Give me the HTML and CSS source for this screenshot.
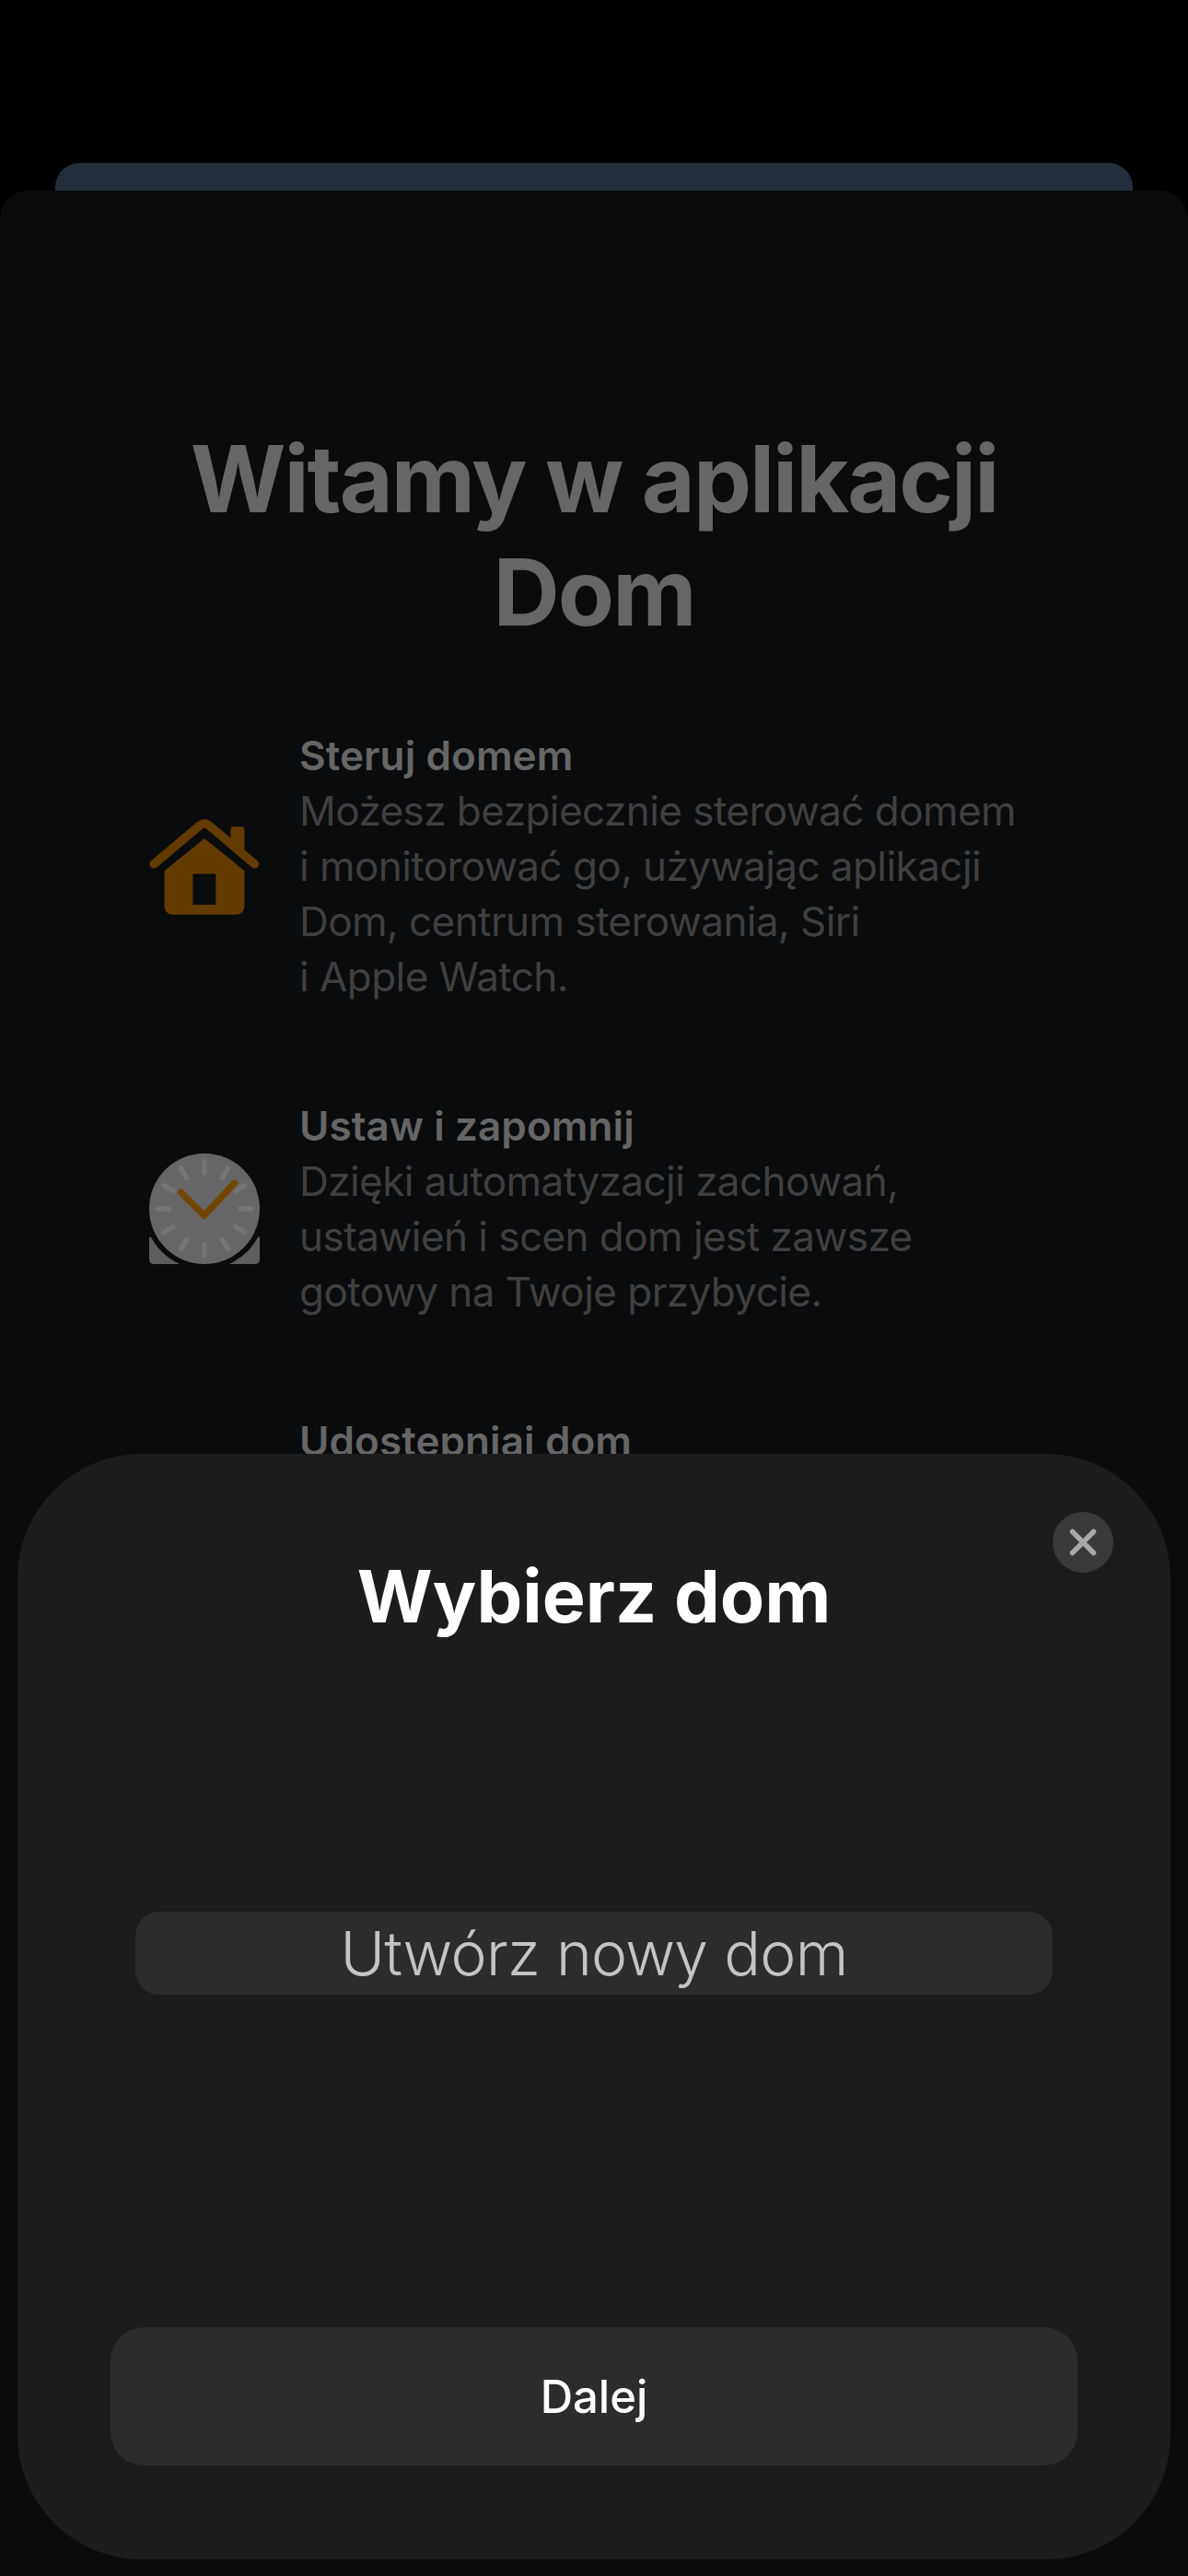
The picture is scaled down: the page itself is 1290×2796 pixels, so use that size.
FILE: index.html
```html
<!DOCTYPE html>
<html lang="pl">
<head>
<meta charset="utf-8">
<title>Wybierz dom</title>
<link rel="stylesheet" href="styles.css">
</head>
<body>
<div class="screen">
  <div class="back-card"></div>
  <main class="front-card">
    <h1 class="welcome">Witamy w aplikacji<br>Dom</h1>
    <section class="feature">
      <svg class="feature-icon" width="120" height="105" viewBox="97 87 356 314" aria-hidden="true">
        <path class="house-fill" d="M360 125q0-10 10-10h25q10 0 10 10v65h-45z"/>
        <path class="house-roof" d="M111 236L262 109q13-10 26 0L438 236"/>
        <path class="house-fill" fill-rule="evenodd" d="M145 258L275 153L405 258V370q0 30-30 30H175q-30 0-30-30zM237 268V368H312V268z"/>
      </svg>
      <div class="feature-text">
        <h2 class="feature-title">Steruj domem</h2>
        <p class="feature-body">Możesz bezpiecznie sterować domem<br>i monitorować go, używając aplikacji<br>Dom, centrum sterowania, Siri<br>i Apple Watch.</p>
      </div>
    </section>
    <section class="feature">
      <svg class="feature-icon" width="120" height="120" viewBox="96 68 360 360" aria-hidden="true">
        <path class="clock-base" d="M96 340H456V412q0 16-16 16H112q-16 0-16-16z"/>
        <circle class="clock-gap" cx="276" cy="248" r="197"/>
        <circle class="clock-face" cx="276" cy="248" r="180"/>
        <g class="clock-ticks">
          <path d="M276 96V132"/><path d="M276 96V132" transform="rotate(30 276 248)"/><path d="M276 96V132" transform="rotate(60 276 248)"/>
          <path d="M276 96V132" transform="rotate(90 276 248)"/><path d="M276 96V132" transform="rotate(120 276 248)"/><path d="M276 96V132" transform="rotate(150 276 248)"/>
          <path d="M276 96V132" transform="rotate(180 276 248)"/><path d="M276 96V132" transform="rotate(210 276 248)"/><path d="M276 96V132" transform="rotate(240 276 248)"/>
          <path d="M276 96V132" transform="rotate(270 276 248)"/><path d="M276 96V132" transform="rotate(300 276 248)"/><path d="M276 96V132" transform="rotate(330 276 248)"/>
        </g>
        <path class="clock-hands" d="M200 195L275 270L374 165"/>
      </svg>
      <div class="feature-text">
        <h2 class="feature-title">Ustaw i zapomnij</h2>
        <p class="feature-body">Dzięki automatyzacji zachowań,<br>ustawień i scen dom jest zawsze<br>gotowy na Twoje przybycie.</p>
      </div>
    </section>
    <section class="feature">
      <div class="feature-spacer"></div>
      <div class="feature-text">
        <h2 class="feature-title">Udostępniaj dom</h2>
      </div>
    </section>
  </main>
  <aside class="sheet">
    <button class="close" aria-label="Zamknij">
      <svg width="30" height="30" viewBox="0 0 30 30" aria-hidden="true"><path d="M3.5 3.5L26.5 26.5M26.5 3.5L3.5 26.5"/></svg>
    </button>
    <h2 class="sheet-title">Wybierz dom</h2>
    <div class="option">Utwórz nowy dom</div>
    <button class="next">Dalej</button>
  </aside>
</div>
</body>
</html>
```
FILE: styles.css
```css
* { box-sizing: border-box; }
html, body { margin: 0; padding: 0; background: #000; }
body { font-family: Inter, "Liberation Sans", sans-serif; }
h1, h2, p { margin: 0; font-weight: normal; }
button { border: 0; padding: 0; font: inherit; }

.screen {
  position: relative;
  width: 1290px;
  height: 2796px;
  overflow: hidden;
  padding-top: 177px;
}
.back-card {
  height: 60px;
  margin: 0 60px -30px;
  border-radius: 26px 26px 0 0;
  background: #23303b;
}
.front-card {
  position: relative;
  height: 2589px;
  padding-top: 251px;
  border-radius: 30px 30px 0 0;
  background: #0a0b0d;
}
.welcome {
  font-size: 100px;
  line-height: 123px;
  font-weight: 700;
  letter-spacing: -2px;
  text-align: center;
  color: #666;
  margin-bottom: 86px;
}
.feature {
  display: flex;
  align-items: center;
  gap: 43px;
  padding-left: 162px;
  margin-bottom: 102px;
}
.feature-icon { flex: none; display: block; }
.feature-spacer { width: 120px; flex: none; }
.feature-title {
  font-size: 44px;
  line-height: 60px;
  font-weight: 600;
  letter-spacing: 0.1px;
  color: #666;
}
.feature-body {
  font-size: 44px;
  line-height: 60px;
  letter-spacing: -0.55px;
  color: #404040;
}
.house-fill { fill: #633b00; }
.house-roof { fill: none; stroke: #633b00; stroke-width: 28; stroke-linecap: round; stroke-linejoin: round; }
.clock-base { fill: #5e5e5e; }
.clock-gap { fill: #0a0b0d; }
.clock-face { fill: #666; }
.clock-ticks path { stroke: #757575; stroke-width: 16; stroke-linecap: round; fill: none; }
.clock-hands { fill: none; stroke: #734600; stroke-width: 22; stroke-linecap: round; stroke-linejoin: round; }

.sheet {
  position: absolute;
  left: 19px;
  right: 19px;
  top: 1578px;
  height: 1200px;
  border-radius: 135px;
  background: #1c1c1e;
  display: flex;
  flex-direction: column;
  align-items: center;
}
.close {
  position: absolute;
  left: 1124px;
  top: 63px;
  width: 66px;
  height: 66px;
  border-radius: 50%;
  background: #3a3a3c;
  display: flex;
  align-items: center;
  justify-content: center;
}
.close path { stroke: #a9a9ab; stroke-width: 5.5; stroke-linecap: round; fill: none; }
.sheet-title {
  margin-top: 114px;
  font-size: 79px;
  line-height: 80px;
  font-weight: 700;
  color: #fff;
}
.option {
  margin-top: 303px;
  width: 996px;
  height: 90px;
  border-radius: 26px;
  background: #2c2c2e;
  font-size: 66px;
  font-weight: 300;
  line-height: 90px;
  letter-spacing: -0.7px;
  text-align: center;
  color: #c4c4c6;
}
.next {
  margin-top: 361px;
  width: 1050px;
  height: 150px;
  border-radius: 36px;
  background: #2c2c2e;
  font-size: 49px;
  font-weight: 500;
  color: #fff;
}
```
